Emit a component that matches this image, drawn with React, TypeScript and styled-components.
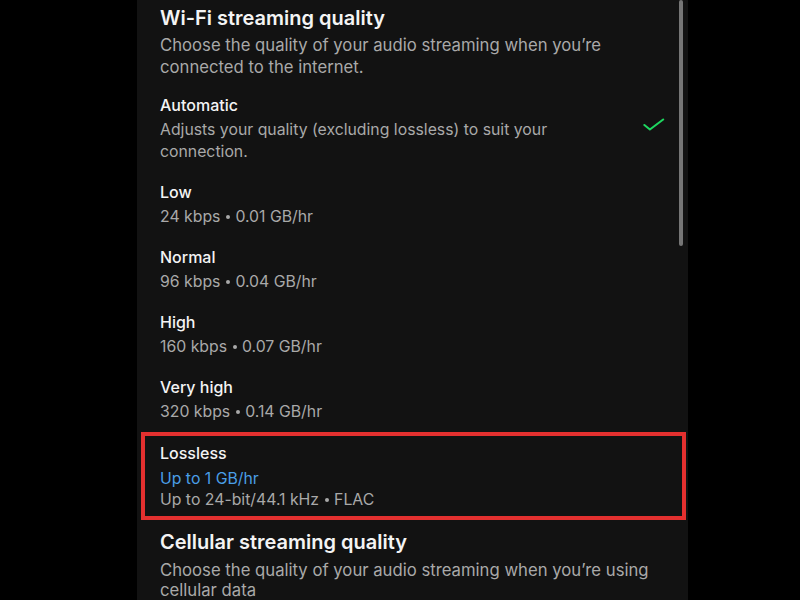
import React from "react";
import styled, { createGlobalStyle } from "styled-components";

type Quality = {
  name: string;
  lines: string[];
  accent?: string;
  selected?: boolean;
  highlighted?: boolean;
};

const qualities: Quality[] = [
  {
    name: "Automatic",
    lines: ["Adjusts your quality (excluding lossless) to suit your", "connection."],
    selected: true,
  },
  { name: "Low", lines: ["24 kbps • 0.01 GB/hr"] },
  { name: "Normal", lines: ["96 kbps • 0.04 GB/hr"] },
  { name: "High", lines: ["160 kbps • 0.07 GB/hr"] },
  { name: "Very high", lines: ["320 kbps • 0.14 GB/hr"] },
  {
    name: "Lossless",
    accent: "Up to 1 GB/hr",
    lines: ["Up to 24-bit/44.1 kHz • FLAC"],
    highlighted: true,
  },
];

// splits "a • b" so the separator can be drawn as a small dot
const renderLine = (line: string) => {
  const parts = line.split(" • ");
  return parts.map((p, i) => (
    <React.Fragment key={i}>
      {i > 0 && <Dot />}
      {p}
    </React.Fragment>
  ));
};

const GlobalStyle = createGlobalStyle`
  html, body {
    margin: 0;
    padding: 0;
    background: #000;
    height: 100%;
    overflow: hidden;
  }
  body {
    font-family: Inter, "Noto Sans", sans-serif;
    -webkit-font-smoothing: antialiased;
  }
`;

export default function App() {
  return (
    <>
      <GlobalStyle />
      <Screen>
        <Panel>
          <Scrollbar />
          <Header>
            <Heading>Wi-Fi streaming quality</Heading>
            <Desc>
              Choose the quality of your audio streaming when you’re
              <br />
              connected to the internet.
            </Desc>
          </Header>

          {qualities.map((q) => (
            <Option key={q.name} highlighted={q.highlighted}>
              <OptionText>
                <OptionName>{q.name}</OptionName>
                {q.accent && <Accent>{q.accent}</Accent>}
                <Detail>
                  {q.lines.map((l, i) => (
                    <React.Fragment key={i}>
                      {i > 0 && <br />}
                      {renderLine(l)}
                    </React.Fragment>
                  ))}
                </Detail>
              </OptionText>
              {q.selected && (
                <Check viewBox="0 0 24 16" fill="none">
                  <path
                    d="M1.5 8.5 L7.5 13.5 L22 2.5"
                    stroke="#1ed760"
                    strokeWidth="2.2"
                    strokeLinecap="round"
                    strokeLinejoin="round"
                  />
                </Check>
              )}
            </Option>
          ))}

          <Header spaced>
            <Heading>Cellular streaming quality</Heading>
            <Desc tight>
              Choose the quality of your audio streaming when you’re using
              <br />
              cellular data
            </Desc>
          </Header>
        </Panel>
      </Screen>
    </>
  );
}

const Screen = styled.div`
  width: 800px;
  height: 600px;
  background: #000;
  display: flex;
  padding-left: 137px;
  box-sizing: border-box;
  overflow: hidden;
`;

const Panel = styled.div`
  position: relative;
  width: 551px;
  height: 600px;
  background: #121212;
  display: flex;
  flex-direction: column;
  overflow: hidden;
`;

const Scrollbar = styled.div`
  position: absolute;
  top: 0;
  right: 5px;
  width: 4px;
  height: 246px;
  border-radius: 2px;
  background: #767676;
`;

const Header = styled.div<{ spaced?: boolean }>`
  padding: ${(p) => (p.spaced ? "9px" : "5px")} 23px 7px 23px;
`;

const Heading = styled.div`
  color: #f4f4f4;
  font-size: 20px;
  font-weight: 600;
  line-height: 26px;
  margin-bottom: 3px;
`;

const Desc = styled.div<{ tight?: boolean }>`
  color: #a9a9a9;
  font-size: 16.7px;
  line-height: ${(p) => (p.tight ? "20px" : "22px")};
  margin-top: ${(p) => (p.tight ? "5px" : "0")};
`;

const Option = styled.div<{ highlighted?: boolean }>`
  display: flex;
  align-items: center;
  padding: 9px 23px 9px 23px;
  ${(p) =>
    p.highlighted &&
    `
    margin: 0 2px 0 4px;
    padding: 6px 17px 5px 15px;
    border: 4px solid #e4302f;
  `}
`;

const OptionText = styled.div`
  flex: 1;
  display: flex;
  flex-direction: column;
  gap: 3px;
`;

const OptionName = styled.div`
  color: #f4f4f4;
  font-size: 16px;
  font-weight: 500;
  line-height: 22px;
`;

const Accent = styled.div`
  color: #4a9ee6;
  font-size: 15.8px;
  line-height: 22px;
  margin-bottom: -4px;
  margin-top: 1px;
`;

const Detail = styled.div`
  color: #a9a9a9;
  font-size: 15.8px;
  line-height: 22px;
`;

const Dot = styled.span`
  display: inline-block;
  width: 4px;
  height: 4px;
  border-radius: 50%;
  background: #a9a9a9;
  margin: 0 5px 0 6px;
  vertical-align: middle;
  position: relative;
  top: -1px;
`;

const Check = styled.svg`
  width: 22px;
  height: 15px;
  margin-top: -2px;
  align-self: flex-start;
  position: relative;
  top: 25px;
`;
